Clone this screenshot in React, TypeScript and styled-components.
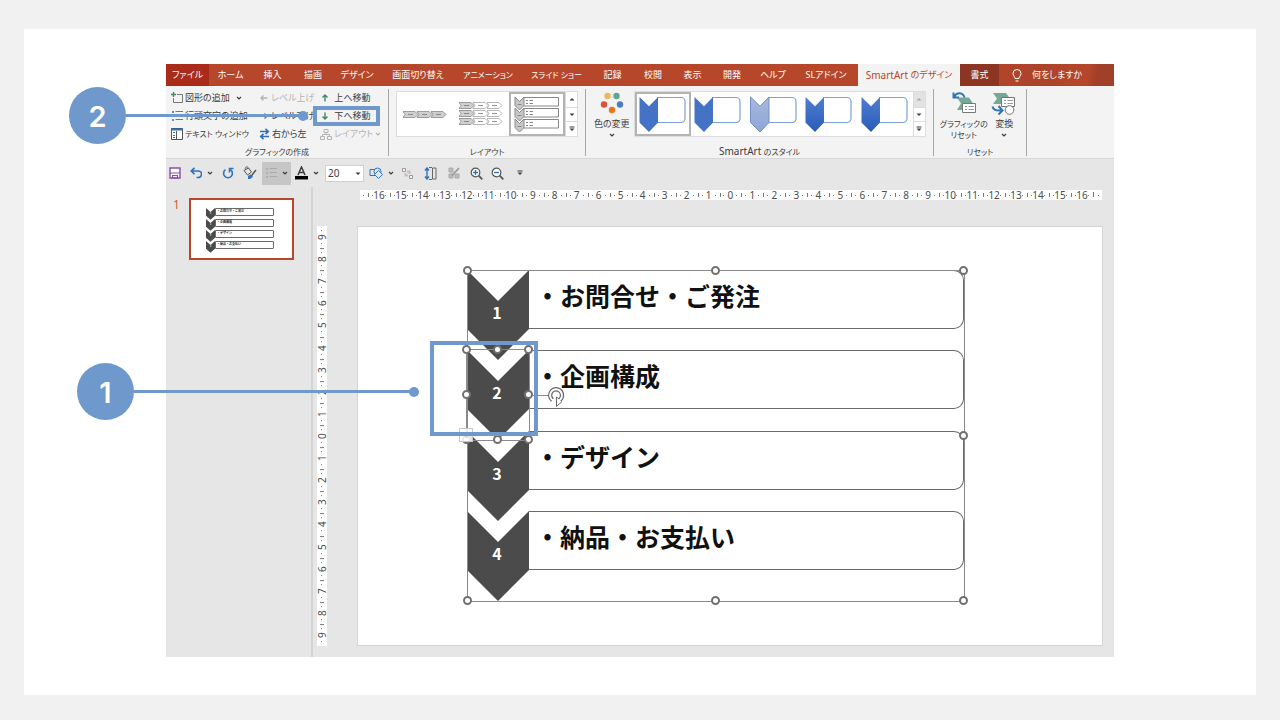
import React from "react";
import styled, { createGlobalStyle, css } from "styled-components";

const jp = `"Noto Sans", "Noto Sans CJK JP", sans-serif`;
const blue = "#6f98cd";
const brand = "#b7472a";
const ink = "#3c3c3c";

const Global = createGlobalStyle`
  * { box-sizing: border-box; }
  body { margin: 0; background: #f1f1f1; font-family: ${jp}; color: ${ink}; }
  button, select, input { font: inherit; color: inherit; }
  button { border: 0; padding: 0; background: none; cursor: pointer; }
  svg { display: block; flex: none; }
`;

const Page = styled.main`
  min-height: 100vh;
  padding: 29px 24px 26px;
  display: flex;
`;
const Card = styled.section`
  flex: 1;
  background: #fff;
  padding: 35px 142px 38px;
`;
const AppWindow = styled.div`
  position: relative;
  display: flex;
  flex-direction: column;
  background: #e6e6e6;
  font-size: 9px;
  line-height: 14px;
  font-feature-settings: "palt";
`;

/* Tab bar */
const TabBar = styled.nav`
  height: 22px;
  display: grid;
  grid-template-columns: 43fr 43fr 41fr 40fr 48fr 74fr 66fr 71fr 41fr 40fr 39fr 40fr 42fr 64fr 102fr 39fr 115fr;
  background: linear-gradient(100deg, ${brand} 76%, #a5412a 76%, ${brand} 84%, #ab432a 92%, ${brand} 97%, #a23f29 98%);
`;
const Tab = styled.button<{ $kind?: "file" | "active" | "context" }>`
  min-width: 0;
  display: flex;
  align-items: center;
  justify-content: center;
  white-space: pre;
  color: #fff;
  ${(p) => p.$kind === "file" && css`background: #a92b1a;`}
  ${(p) => p.$kind === "active" && css`background: #f3f3f3; color: ${brand};`}
  ${(p) => p.$kind === "context" && css`background: #8b3522;`}
`;
const Tell = styled(Tab)`
  justify-content: flex-start;
  gap: 10px;
  padding-left: 13px;
`;
const Small = styled.span`
  font-size: 8px;
`;
const Latin = styled.span`
  font-size: 10px;
`;

/* Ribbon */
const Ribbon = styled.div`
  height: 73px;
  display: flex;
  background: #f3f3f3;
  border-bottom: 1px solid #d8d8d8;
  padding: 3px 0 2px;
`;
const Group = styled.section<{ $grow: number }>`
  flex: ${(p) => p.$grow} 1 0;
  min-width: 0;
  display: flex;
  flex-direction: column;
  justify-content: space-between;
  border-right: 1px solid #a8a8a8;
`;
const Spacer = styled.div`
  flex: 87 1 0;
`;
const GroupName = styled.div`
  text-align: center;
  line-height: 8px;
`;
const Commands = styled.div`
  display: grid;
  grid-template-columns: 88px 61px 1fr;
  grid-auto-rows: 18px;
  padding-left: 5px;
`;
const Command = styled.button`
  display: flex;
  align-items: center;
  gap: 2px;
  white-space: nowrap;
  &:disabled { color: #b4b4b4; }
`;
const GalleryRow = styled.div<{ $left: number }>`
  display: flex;
  height: 48px;
  padding: 2px 7px 0 ${(p) => p.$left}px;
`;
const Gallery = styled.div`
  flex: 1;
  height: 46px;
  display: flex;
  background: #fff;
  border: 1px solid #dcdcdc;
`;
const GalleryItem = styled.button<{ $on?: boolean }>`
  flex: 1;
  display: flex;
  align-items: center;
  justify-content: center;
  border: 2px solid ${(p) => (p.$on ? "#b4b4b4" : "transparent")};
`;
const Scroller = styled.div`
  width: 12px;
  display: grid;
  grid-template-rows: repeat(3, 1fr);
  border-left: 1px solid #dcdcdc;
`;
const ScrollButton = styled.button`
  display: flex;
  align-items: center;
  justify-content: center;
  &:disabled { background: #e2e2e2; color: #aaa; }
  & + & { border-top: 1px solid #dcdcdc; }
`;
const BigButton = styled.button<{ $w: number }>`
  width: ${(p) => p.$w}px;
  height: 46px;
  display: flex;
  flex-direction: column;
  align-items: center;
  line-height: 11px;
  white-space: nowrap;
  & > svg:first-child { margin-bottom: 3px; }
  & > svg:last-child { margin-top: 4px; }
`;
const BigRow = styled.div`
  display: flex;
  padding: 2px 0 0 5px;
`;

/* Quick access bar */
const QuickBar = styled.div`
  height: 28px;
  display: flex;
  align-items: center;
`;
const Quick = styled.button<{ $w: number; $on?: boolean }>`
  width: ${(p) => p.$w}px;
  height: 23px;
  display: flex;
  align-items: center;
  justify-content: center;
  gap: 5px;
  background: ${(p) => (p.$on ? "#c6c6c6" : "none")};
`;
const SizeField = styled.label`
  display: grid;
  align-items: center;
  width: 39px;
  height: 17px;
  margin: 0 3px 0 2px;
  background: #fff;
  border: 1px solid #d0d0d0;
  & > * { grid-area: 1 / 1; }
  svg { justify-self: end; margin-right: 2px; }
`;
const SizeSelect = styled.select`
  appearance: none;
  border: 0;
  background: none;
  padding: 0 2px;
  font-size: 10px;
`;

/* Work area */
const Work = styled.div`
  display: flex;
`;
const Pane = styled.aside`
  width: 147px;
  display: flex;
  align-items: flex-start;
  gap: 10px;
  padding: 11px 0 0 7px;
  border-right: 2px solid #d4d4d4;
`;
const PaneNumber = styled.span`
  width: 6px;
  font-size: 12px;
  color: #d9573a;
`;
const Thumb = styled.button`
  width: 105px;
  height: 62px;
  padding: 0 18px 2px 15px;
  border: 2px solid ${brand};
  background: #fff;
  text-align: left;
`;
const Editor = styled.div`
  flex: 1;
  min-width: 0;
  display: grid;
  grid-template-columns: 10px 1fr;
  grid-template-rows: 10px 1fr;
  column-gap: 30px;
  row-gap: 26px;
  padding: 3px 11px 11px 4px;
`;
const tick = "linear-gradient(#777, #777)";
const HRuler = styled.div`
  grid-column: 2;
  display: flex;
  margin: 0 1px 0 3px;
  padding: 0 8px;
  font-size: 10px;
  line-height: 10px;
  color: #4c4c4c;
  background: ${tick} 3px 5px / 1px 1px no-repeat, ${tick} calc(100% - 3px) 5px / 1px 1px no-repeat, #fff;
`;
const HCell = styled.span`
  flex: 1 1 0;
  min-width: 0;
  display: flex;
  align-items: center;
  justify-content: center;
  background: ${tick} 0 50% / 1px 4px no-repeat, ${tick} 19% 50% / 1px 1px no-repeat, ${tick} 81% 50% / 1px 1px no-repeat;
  &:last-child { border-right: 1px solid #777; border-image: linear-gradient(transparent 30%, #777 30%, #777 70%, transparent 70%) 1; }
`;
const VRuler = styled.div`
  display: flex;
  flex-direction: column;
  background: #fff;
  font-size: 10px;
  line-height: 10px;
  color: #4c4c4c;
`;
const VCell = styled.span`
  flex: 1 1 0;
  min-height: 0;
  display: flex;
  align-items: center;
  justify-content: center;
  writing-mode: vertical-rl;
  transform: rotate(180deg);
  background: ${tick} 50% 20% / 1px 1px no-repeat, ${tick} 50% 80% / 1px 1px no-repeat;
  & + & { background: ${tick} 50% 100% / 4px 1px no-repeat, ${tick} 50% 20% / 1px 1px no-repeat, ${tick} 50% 80% / 1px 1px no-repeat; }
`;
const Slide = styled.div`
  min-height: 420px;
  padding: 43px 138px 0 109px;
  background: #fff;
  border: 1px solid #d4d4d4;
`;
const Art = styled.div`
  position: relative;
  height: 331px;
`;

/* Chevron list */
const List = styled.ol<{ $mini?: boolean }>`
  list-style: none;
  margin: 0;
  padding: 0;
  height: ${(p) => (p.$mini ? 41 : 300)}px;
  display: flex;
  flex-direction: column;
  justify-content: space-between;
  font-family: "Noto Sans CJK JP", sans-serif;
  font-weight: 700;
  font-feature-settings: normal;
`;
const Step = styled.li<{ $mini?: boolean }>`
  height: ${(p) => (p.$mini ? 8 : 59)}px;
  display: grid;
  grid-template-columns: ${(p) => (p.$mini ? 9 : 62)}px 1fr;
  grid-template-rows: 100%;
`;
const Badge = styled.div<{ $mini?: boolean }>`
  height: ${(p) => (p.$mini ? 12 : 91)}px;
  display: grid;
  place-items: center;
  color: #fff;
  font-size: ${(p) => (p.$mini ? 2 : 16)}px;
  line-height: 1;
  & > * { grid-area: 1 / 1; width: 100%; text-align: center; }
  svg { height: 100%; min-height: 0; }
  span { padding: ${(p) => (p.$mini ? "0" : "0 2px 7px 0")}; }
`;
const StepText = styled.div<{ $mini?: boolean }>`
  display: flex;
  align-items: center;
  white-space: nowrap;
  color: #111;
  border: 1px solid #6a6a6a;
  border-left-width: ${(p) => (p.$mini ? 1 : 0)}px;
  border-radius: ${(p) => (p.$mini ? "0 1px 1px 0" : "0 10px 10px 0")};
  padding: ${(p) => (p.$mini ? "0 0 0 1px" : "0 0 8px 6px")};
  font-size: ${(p) => (p.$mini ? 3 : 25)}px;
  line-height: 1;
`;

/* Selection marks lie over the drawing */
const Frame = styled.div<{ $item?: boolean }>`
  position: absolute;
  border: 1px solid #8a8a8a;
  ${(p) => (p.$item ? css`left: -1px; top: 79px; width: 64px; height: 92px;` : css`inset: 0 -1px -1px 0;`)}
`;
const Handle = styled.i<{ $x: number; $y: number }>`
  position: absolute;
  left: ${(p) => p.$x}%;
  top: ${(p) => p.$y}%;
  width: 9px;
  height: 9px;
  margin: -5px;
  border: 2px solid #707070;
  border-radius: 50%;
  background: #fff;
`;
const Rotate = styled.div`
  position: absolute;
  left: 62px;
  top: 33px;
`;
const SmartTag = styled.div`
  position: absolute;
  left: -8px;
  top: 158px;
  width: 14px;
  height: 14px;
  display: grid;
  place-items: center;
  background: rgba(255, 255, 255, 0.85);
  border: 1px solid #c8c8c8;
`;

/* Numbered call-outs */
const Callout = styled.div<{ $x: number; $y: number; $line: number }>`
  position: absolute;
  left: ${(p) => p.$x}px;
  top: ${(p) => p.$y}px;
  display: flex;
  align-items: center;
  pointer-events: none;
  &::after {
    content: "";
    width: ${(p) => p.$line}px;
    height: 3px;
    background: ${blue};
  }
`;
const CalloutNumber = styled.span`
  width: 57px;
  height: 57px;
  padding-top: 2px;
  display: grid;
  place-items: center;
  border-radius: 50%;
  background: ${blue};
  color: #fff;
  font: 600 29px/55px Inter, sans-serif;
`;
const CalloutDot = styled.i`
  order: 2;
  width: 10px;
  height: 10px;
  margin-left: -5px;
  border-radius: 50%;
  background: ${blue};
`;
const Outline = styled.div<{ $x: number; $y: number; $w: number; $h: number }>`
  position: absolute;
  left: ${(p) => p.$x}px;
  top: ${(p) => p.$y}px;
  width: ${(p) => p.$w}px;
  height: ${(p) => p.$h}px;
  border: 4px solid ${blue};
  pointer-events: none;
`;

/* Icons */
const Svg = ({ w, h = w, children }: { w: number; h?: number; children: React.ReactNode }) => (
  <svg width={w} height={h} viewBox={`0 0 ${w} ${h}`} fill="none" stroke="currentColor" aria-hidden>
    {children}
  </svg>
);
const Chev = () => <Svg w={6} h={4}><path d="M1 1l2 2 2-2" strokeWidth="1.2" /></Svg>;
const Tri = ({ up, bar }: { up?: boolean; bar?: boolean }) => (
  <Svg w={6} h={6}>
    {bar && <path d="M.5 1h5" />}
    <path d={up ? "M.5 4.5h5L3 2z" : "M.5 2.5h5L3 5z"} fill="currentColor" stroke="none" />
  </Svg>
);
const AddShape = () => <Svg w={12}><path d="M6 2.500h5.500v8H2.500V6" stroke="#777" /><path d="M2.500 0v5M0 2.500h5" stroke="#3f8a63" strokeWidth="1.400" /></Svg>;
const BulletIcon = ({ c = "#2f6fb5", l = "#777" }) => <Svg w={12}><path d="M1 2h2M1 6h2M1 10h2" stroke={c} strokeWidth="1.600" /><path d="M4.500 1.500H12M4.500 5.500H12M4.500 9.500H12" stroke={l} /></Svg>;
const PaneIcon = () => <Svg w={12}><path d="M.5.5h11v11H.5z" stroke="#555" fill="#fff" /><path d="M0 1.500h12" stroke="#2f6fb5" strokeWidth="2" /><path d="M5.500 3v9" stroke="#555" /><path d="M2 4.500h2M2 7.500h2M2 9.500h2" stroke="#2f6fb5" /></Svg>;
const Arrow = ({ d, c }: { d: "l" | "r" | "u" | "d"; c: string }) => (
  <Svg w={10}>
    <g transform={`rotate(${{ l: 0, u: 90, r: 180, d: 270 }[d]} 5 5)`} stroke={c} strokeWidth="1.400"><path d="M8.500 5H2M4.500 2.500L2 5l2.500 2.500" /></g>
  </Svg>
);
const Swap = () => <Svg w={11} h={12}><path d="M1 3.500h8M6.500.8l2.800 2.700-2.800 2.700M10 8.500H2M4.500 5.800L1.700 8.500l2.800 2.700" stroke="#2f6fb5" strokeWidth="1.600" /></Svg>;
const Org = () => <Svg w={12} h={11}><path d="M4 .5h4v3H4zM.5 7.500h4v3h-4zM7.500 7.500h4v3h-4zM6 4v2M2.500 7V5.500h7V7" /></Svg>;
const Bulb = () => <Svg w={10} h={13}><path d="M3 9.500c0-2-2-2.500-2-5a4 4 0 018 0c0 2.500-2 3-2 5zM3.500 12h3" stroke="#fff" /></Svg>;

const arrowRow = (y: number, first: number) =>
  Array.from({ length: 3 }, (_, i) => (
    <g key={i} transform={`translate(${i * 14} ${y})`} strokeWidth=".8">
      <path d="M0 0h12l3 3-3 3H0l2-3z" fill={i < first ? "#cfcfcf" : "#fff"} stroke={i < first ? "#8a8a8a" : "#a4a4a4"} />
      <path d="M5 3h5" stroke="#777" />
    </g>
  ));
const LayoutA = () => <Svg w={44} h={7}>{arrowRow(0.5, 3)}</Svg>;
const LayoutB = () => <Svg w={44} h={24}>{[0, 8, 16].map((y) => <g key={y}>{arrowRow(y + 0.5, 1)}</g>)}</Svg>;
const LayoutC = () => (
  <Svg w={46} h={38}>
    {[0, 11, 22].map((y) => (
      <g key={y} transform={`translate(0 ${y + 1})`} stroke="#888">
        <path d="M9.500 1.500h35v8.500h-35z" fill="#fff" />
        <path d="M1 1l4.500 4.500L10 1v8.500L5.500 14 1 9.500z" fill="#c8c8c8" />
        <path d="M3.500 8.500h4M12 4.500h2M12 7.500h2M15.500 4.500H19M15.500 7.500H19" />
      </g>
    ))}
  </Svg>
);
const StyleIcon = ({ kind }: { kind: number }) => (
  <Svg w={48} h={38}>
    <defs>
      <linearGradient id={`g${kind}`} x1="0" y1="0" x2="0" y2="1">
        <stop stopColor={["#4472c4", "#4472c4", "#a9b9dd", "#4f7dd0", "#4f7dd0"][kind]} />
        <stop offset="1" stopColor={["#4472c4", "#4472c4", "#8ea5d8", "#2a5cb8", "#2a5cb8"][kind]} />
      </linearGradient>
    </defs>
    <path d="M18 2.500h24a4 4 0 014 4v17a4 4 0 01-4 4H18" fill="#fff" stroke="#7f9fd8" strokeWidth="1.200" />
    <path d="M.5 2l9.500 9.200L19 2v25.500L10 37 .5 27.500z" fill={`url(#g${kind})`} stroke={kind === 2 ? "#6f8fcf" : "none"} />
  </Svg>
);
const Dots = () => (
  <Svg w={24}>
    <g stroke="none">
      <circle cx="7.500" cy="5" r="3.200" fill="#edb85c" /><circle cx="16.500" cy="5" r="3.200" fill="#62a690" />
      <circle cx="4" cy="13.500" r="3.200" fill="#d9553a" /><circle cx="20" cy="13.500" r="3.200" fill="#4a7fbd" />
      <circle cx="12" cy="19" r="3.200" fill="#e8761b" />
    </g>
  </Svg>
);
const Reset = () => (
  <Svg w={26} h={24}>
    <path d="M6 6.500h12l4 6-4 6.500H6l4-6.500z" fill="#75a996" stroke="none" />
    <path d="M11.500 12.500h13v9h-13z" fill="#fff" stroke="#777" />
    <path d="M14 15.500h2M14 18.500h2M17.500 15.500H23M17.500 18.500H23" stroke="#999" />
    <path d="M3 6c3-5.500 9-4.500 10.500.5M2.500 1.500v5H8" stroke="#2f74b8" strokeWidth="2" />
  </Svg>
);
const Convert = () => (
  <Svg w={26} h={24}>
    <path d="M2 2h13l4 5.500L15 13H2l4-5.500z" fill="#75a996" stroke="none" />
    <path d="M10.500 6.500h13v9h-13z" fill="#fff" stroke="#777" />
    <path d="M13 9.500h2M13 12.500h2M16.500 9.500H22M16.500 12.500H22" stroke="#999" />
    <path d="M1.500 15.500c1 4 4 4.500 9 4M7.500 15l4 4.500-4 4" stroke="#2f74b8" strokeWidth="2" />
    <circle cx="18.500" cy="19" r="4.300" fill="#fff" stroke="#777" />
  </Svg>
);
const Save = () => <Svg w={12}><path d="M1 1h10v10H1z" fill="#fff" stroke="#8a4fa8" strokeWidth="1.400" /><path d="M1 6h10M3.500 8.500h5V11h-5z" stroke="#8a4fa8" strokeWidth="1.200" /></Svg>;
const Undo = () => <Svg w={12}><path d="M1.500 4H8a3.300 3 0 010 6.500H6.500M4.500.8L1.300 4l3.200 3.200" stroke="#2f74b8" strokeWidth="1.700" /></Svg>;
const Redo = () => <Svg w={12}><path d="M3.500 2.700a4.400 4.400 0 105 0M7.500 5.500V1.500h4" stroke="#2f74b8" strokeWidth="1.600" /></Svg>;
const Paint = () => <Svg w={14}><path d="M1 4.500l4.500-2.500 3 4L4.500 9zM2.500 3.500C1.500.5 5 0 5.500 2.500" stroke="#555" /><path d="M13 4L9 9" stroke="#555" strokeWidth="1.500" /><path d="M5 10c2-2 4-2 5 0-1 2.500-3 3-5 3z" fill="#2f74b8" stroke="none" /></Svg>;
const FontColor = () => <Svg w={13} h={14}><path d="M3 9l3.500-8L10 9M4.500 6.500h4" strokeWidth="1.500" /><path d="M0 11.700h13" stroke="#000" strokeWidth="3.500" /></Svg>;
const Shapes = () => <Svg w={14} h={12}><path d="M1 2.500h6v6H1z" stroke="#2f74b8" /><circle cx="8.500" cy="4.500" r="3.500" fill="#e6e6e6" stroke="#2f74b8" /><path d="M9.500 3.500l4 4-4 4-4-4z" fill="#e6e6e6" stroke="#2f74b8" /></Svg>;
const Objects = () => <Svg w={13}><path d="M1.500 1.500h3v3h-3zM8.500 8.500h3v3h-3z" fill="#f6f6f6" stroke="#999" /><path d="M6 4.500h2.500V7M4.500 6v2.500H7" stroke="#cbb9cb" strokeWidth="2" /></Svg>;
const SizeIcon = () => <Svg w={13}><path d="M3 1v11M1 3.500L3 1l2 2.500M1 9.500L3 12l2-2.500" stroke="#2f74b8" strokeWidth="1.400" /><path d="M8.500 1h3.500v11H8.500zM5 .5h3M5 12.500h3" stroke="#666" /></Svg>;
const Edit = () => <Svg w={12}><path d="M1 1h4v4H1zM7 7h4v4H7zM1 7h4v4H1z" fill="#bbb" stroke="#aaa" /><path d="M11 1L4 8.500" stroke="#999" strokeWidth="1.800" /></Svg>;
const Zoom = ({ plus }: { plus?: boolean }) => <Svg w={13}><circle cx="5.500" cy="5.500" r="4.300" fill="#fff" stroke="#555" strokeWidth="1.200" /><path d="M8.700 8.700l3.600 3.600" stroke="#555" strokeWidth="1.800" /><path d={plus ? "M3 5.500h5M5.500 3v5" : "M3 5.500h5"} stroke="#2f74b8" strokeWidth="1.400" /></Svg>;
const RotateIcon = () => (
  <Svg w={38} h={26}>
    <path d="M3 12.500h17" stroke="#8a8a8a" />
    <path d="M23.500 17A6 6 0 1 1 30 17.500" stroke="#666" strokeWidth="4.400" />
    <path d="M27.500 14v9.500l5.500-5z" fill="#fff" stroke="#666" />
    <path d="M24 17.500A6 6 0 1 1 29 18" stroke="#fff" strokeWidth="2" />
  </Svg>
);

const steps = ["お問合せ・ご発注", "企画構成", "デザイン", "納品・お支払い"];
const tabs = ["ホーム", "挿入", "描画", "デザイン", "画面切り替え", "アニメーション", "スライド ショー", "記録", "校閲", "表示", "開発", "ヘルプ", "SLアドイン"];
const longTabs = ["アニメーション", "スライド ショー"];
const corners = [[0, 0], [50, 0], [100, 0], [100, 50], [0, 100], [50, 100], [100, 100]];

const Steps = ({ mini }: { mini?: boolean }) => (
  <List $mini={mini}>
    {steps.map((s, i) => (
      <Step key={s} $mini={mini}>
        <Badge $mini={mini}>
          <svg viewBox="0 0 62 91" preserveAspectRatio="none"><path d="M0 0l31 31L62 0v59L31 90 0 59z" fill="#4b4b4b" /></svg>
          <span>{i + 1}</span>
        </Badge>
        <StepText $mini={mini}>・{s}</StepText>
      </Step>
    ))}
  </List>
);
const ScrollButtons = ({ top }: { top?: boolean }) => (
  <Scroller>
    <ScrollButton aria-label="前へ" disabled={top}><Tri up /></ScrollButton>
    <ScrollButton aria-label="次へ"><Tri /></ScrollButton>
    <ScrollButton aria-label="その他"><Tri bar /></ScrollButton>
  </Scroller>
);

export default function App() {
  return (
    <Page>
      <Global />
      <Card>
        <AppWindow>
          <TabBar>
            <Tab $kind="file">ファイル</Tab>
            {tabs.map((t) => <Tab key={t}>{longTabs.includes(t) ? <Small>{t}</Small> : t}</Tab>)}
            <Tab $kind="active"><Latin>SmartArt </Latin>のデザイン</Tab>
            <Tab $kind="context">書式</Tab>
            <Tell><Bulb />何をしますか</Tell>
          </TabBar>

          <Ribbon>
            <Group $grow={223}>
              <Commands>
                <Command><AddShape />図形の追加&nbsp;&nbsp;<Chev /></Command>
                <Command disabled><Arrow d="l" c="#b4b4b4" />レベル上げ</Command>
                <Command><Arrow d="u" c="#3f8a63" />&nbsp;上へ移動</Command>
                <Command><BulletIcon />行頭文字の追加</Command>
                <Command><Arrow d="r" c="#3f8a63" />レベル下げ</Command>
                <Command><Arrow d="d" c="#3f8a63" />&nbsp;下へ移動</Command>
                <Command><PaneIcon /><Small>テキスト ウィンドウ</Small></Command>
                <Command><Swap />右から左</Command>
                <Command disabled><Org />レイアウト<Chev /></Command>
              </Commands>
              <GroupName><Small>グラフィックの作成</Small></GroupName>
            </Group>
            <Group $grow={197}>
              <GalleryRow $left={7}>
                <Gallery>
                  <GalleryItem aria-label="基本プロセス"><LayoutA /></GalleryItem>
                  <GalleryItem aria-label="複数プロセス"><LayoutB /></GalleryItem>
                  <GalleryItem aria-label="縦方向プロセス" $on><LayoutC /></GalleryItem>
                  <ScrollButtons />
                </Gallery>
              </GalleryRow>
              <GroupName><Small>レイアウト</Small></GroupName>
            </Group>
            <Group $grow={348}>
              <GalleryRow $left={3}>
                <BigButton $w={45}><Dots /><span>色の変更</span><Chev /></BigButton>
                <Gallery>
                  {[0, 1, 2, 3, 4].map((k) => (
                    <GalleryItem key={k} $on={k === 0} aria-label={`スタイル ${k + 1}`}><StyleIcon kind={k} /></GalleryItem>
                  ))}
                  <ScrollButtons top />
                </Gallery>
              </GalleryRow>
              <GroupName><Latin>SmartArt</Latin> <Small>のスタイル</Small></GroupName>
            </Group>
            <Group $grow={93}>
              <BigRow>
                <BigButton $w={50}><Reset /><Small>グラフィックの</Small><Small>リセット</Small></BigButton>
                <BigButton $w={31}><Convert /><span>変換</span><Chev /></BigButton>
              </BigRow>
              <GroupName><Small>リセット</Small></GroupName>
            </Group>
            <Spacer />
          </Ribbon>

          <QuickBar>
            <Quick $w={18} aria-label="保存"><Save /></Quick>
            <Quick $w={34} aria-label="元に戻す"><Undo /><Chev /></Quick>
            <Quick $w={20} aria-label="繰り返し"><Redo /></Quick>
            <Quick $w={24} aria-label="書式のコピー"><Paint /></Quick>
            <Quick $w={29} $on aria-label="箇条書き"><BulletIcon c="#aaa" l="#aaa" /><Chev /></Quick>
            <Quick $w={32} aria-label="フォントの色"><FontColor /><Chev /></Quick>
            <SizeField>
              <SizeSelect aria-label="フォント サイズ" defaultValue="20"><option>20</option><option>24</option></SizeSelect>
              <Tri />
            </SizeField>
            <Quick $w={28} aria-label="図形"><Shapes /><Chev /></Quick>
            <Quick $w={24} aria-label="グループ化"><Objects /></Quick>
            <Quick $w={23} aria-label="高さ"><SizeIcon /></Quick>
            <Quick $w={23} aria-label="編集"><Edit /></Quick>
            <Quick $w={22} aria-label="拡大"><Zoom plus /></Quick>
            <Quick $w={21} aria-label="縮小"><Zoom /></Quick>
            <Quick $w={24} aria-label="カスタマイズ"><Tri bar /></Quick>
          </QuickBar>

          <Work>
            <Pane>
              <PaneNumber>1</PaneNumber>
              <Thumb><Steps mini /></Thumb>
            </Pane>
            <Editor>
              <HRuler>{Array.from({ length: 33 }, (_, i) => <HCell key={i}>{Math.abs(i - 16)}</HCell>)}</HRuler>
              <VRuler>{Array.from({ length: 19 }, (_, i) => <VCell key={i}>{Math.abs(i - 9)}</VCell>)}</VRuler>
              <Slide>
                <Art>
                  <Steps />
                  <Frame>{corners.map(([x, y]) => <Handle key={`${x}-${y}`} $x={x} $y={y} />)}</Frame>
                  <Frame $item>
                    {[...corners, [0, 50]].map(([x, y]) => <Handle key={`${x}-${y}`} $x={x} $y={y} />)}
                    <Rotate><RotateIcon /></Rotate>
                  </Frame>
                  <SmartTag><Svg w={6} h={8}><path d="M4.500 1L1.500 4l3 3" stroke="#aaa" /></Svg></SmartTag>
                </Art>
              </Slide>
            </Editor>
          </Work>

          <Outline $x={147} $y={42} $w={67} $h={20} />
          <Outline $x={264} $y={277} $w={108} $h={95} />
          <Callout $x={-97} $y={23} $line={177}><CalloutNumber>2</CalloutNumber><CalloutDot /></Callout>
          <Callout $x={-89} $y={299} $line={280}><CalloutNumber>1</CalloutNumber><CalloutDot /></Callout>
        </AppWindow>
      </Card>
    </Page>
  );
}
